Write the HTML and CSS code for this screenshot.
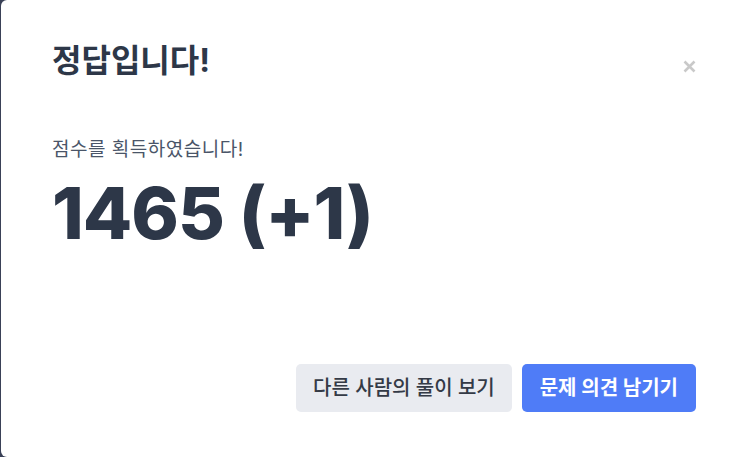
FILE: index.html
```html
<!DOCTYPE html>
<html lang="ko">
<head>
<meta charset="utf-8">
<link rel="stylesheet" href="styles.css">
</head>
<body>
<div class="modal">
  <div class="modal-header">
    <h2 class="title">정답입니다!</h2>
    <button class="close" aria-label="닫기">
      <svg width="13" height="13" viewBox="0 0 13 13"><path d="M1.5 1.5 L11.5 11.5 M11.5 1.5 L1.5 11.5" stroke="#c9c9c9" stroke-width="2.6" stroke-linecap="butt"/></svg>
    </button>
  </div>
  <div class="modal-body">
    <p class="subtitle">점수를 획득하였습니다!</p>
    <div class="score">1465 (+1)</div>
  </div>
  <div class="modal-footer">
    <button class="btn btn-secondary">다른 사람의 풀이 보기</button>
    <button class="btn btn-primary">문제 의견 남기기</button>
  </div>
</div>
</body>
</html>
```

FILE: styles.css
```css
html, body {
  margin: 0;
  padding: 0;
  height: 100%;
}
body {
  background: #3a4157;
  font-family: Inter, "Noto Sans CJK KR", sans-serif;
  overflow: hidden;
}
.modal {
  margin-left: 1px;
  width: 746px;
  height: 457px;
  background: #ffffff;
  border-radius: 6px 0 0 6px;
  box-sizing: border-box;
  padding: 0 51px;
  display: flex;
  flex-direction: column;
}
.modal-header {
  display: flex;
  justify-content: space-between;
  align-items: flex-start;
  padding-top: 41px;
}
.title {
  margin: 0;
  font-size: 32px;
  font-weight: 700;
  line-height: 40px;
  color: #2d3748;
}
.close {
  border: 0;
  background: none;
  padding: 0;
  margin-top: 19px;
  width: 13px;
  height: 13px;
  display: block;
}
.close svg { display: block; }
.modal-body {
  padding-top: 57px;
}
.subtitle {
  margin: 0;
  font-size: 19px;
  line-height: 24px;
  letter-spacing: 0.5px;
  color: #4a5568;
}
.score {
  margin-top: 7px;
  font-size: 72px;
  font-weight: 800;
  line-height: 88px;
  color: #2d3748;
  letter-spacing: -1px;
}
.modal-footer {
  margin-top: auto;
  margin-bottom: 45px;
  display: flex;
  justify-content: flex-end;
  gap: 10px;
}
.btn {
  border: 0;
  border-radius: 5px;
  height: 48px;
  padding: 0 17px;
  font-family: inherit;
  font-size: 20px;
  line-height: 48px;
}
.btn-secondary {
  background: #e9ebf0;
  color: #343a46;
  font-weight: 500;
}
.btn-primary {
  background: #4f7cf7;
  color: #ffffff;
  font-weight: 700;
  padding: 0 18px;
}
```
